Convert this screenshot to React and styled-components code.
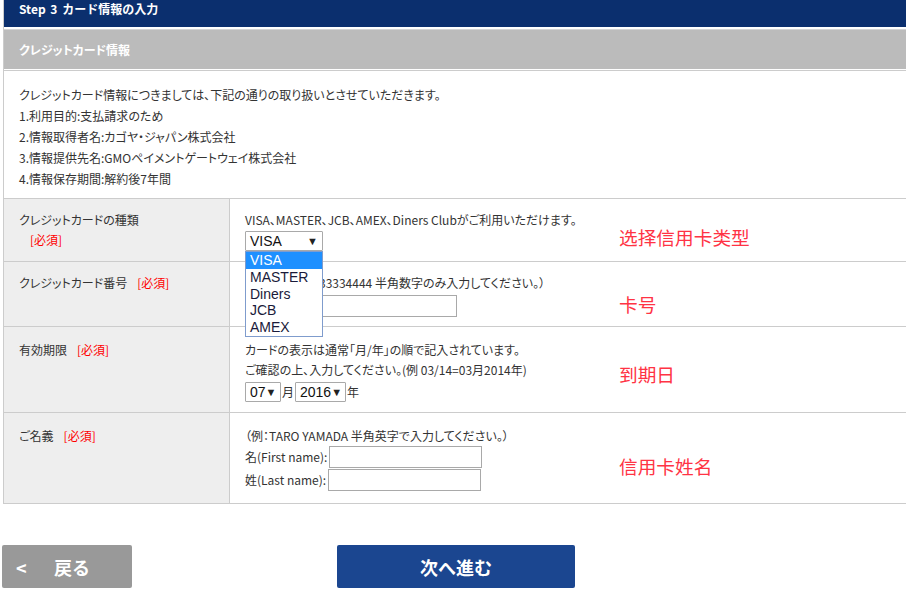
import styled, { createGlobalStyle } from "styled-components"

const GlobalStyle = createGlobalStyle`
    body {
        margin: 0;
        background: #fff;
        font-family: "Noto Sans CJK JP", "Liberation Sans", sans-serif;
        font-size: 12px;
        color: #333;
    }
`

const Page = styled.div`
    width: 906px;
    overflow: hidden;
`

const Section = styled.div`
    margin-left: 3px;
    width: 920px;
    border-left: 1px solid #ccc;
    border-bottom: 1px solid #ccc;
`

const StepBar = styled.div`
    height: 27px;
    padding: 0 15px;
    background-color: #0b2f6e;
    color: #fff;
    font-weight: bold;
    line-height: 17px;
    word-spacing: 2px;
`

const SubBar = styled.div`
    margin-top: 2px;
    border-top: 1px solid #d4d4d4;
    height: 39px;
    padding: 0 15px;
    display: flex;
    align-items: center;
    background-color: #bbb;
    color: #fff;
    font-weight: bold;
    font-feature-settings: "palt";
`

const Intro = styled.div`
    margin-top: 1px;
    border-top: 1px solid #ccc;
    padding: 13px 15px 9px;
    line-height: 21px;
    font-feature-settings: "palt";
`

const Row = styled.div`
    display: flex;
    border-top: 1px solid #ccc;
    line-height: 20px;
    font-feature-settings: "palt";
`

const Label = styled.div`
    width: 226px;
    flex-shrink: 0;
    padding: ${props => props.pt}px 15px 0;
    box-sizing: border-box;
    background-color: #eee;
    border-right: 1px solid #ccc;
`

const Required = styled.span`
    color: #f00;
    margin-left: ${props => props.block ? "0" : "10px"};
    display: ${props => props.block ? "block" : "inline"};
    padding-left: ${props => props.block ? "11px" : "0"};
`

const Value = styled.div`
    flex: 1;
    display: flex;
    padding: ${props => props.pt}px 15px ${props => props.pb}px;
`

const Body = styled.div`
    width: 374px;
    flex-shrink: 0;
`

const Note = styled.div`
    align-self: center;
    margin-top: ${props => props.mt}px;
    color: #ff3344;
    font-family: "Noto Sans CJK SC", sans-serif;
    font-size: 18.7px;
    line-height: 24px;
`

const Line = styled.div`
    white-space: nowrap;
`

const FieldLine = styled.div`
    display: flex;
    align-items: center;
    white-space: nowrap;
    margin-top: ${props => props.mt || 0}px;
`

const SelectWrap = styled.div`
    position: relative;
    width: ${props => props.w}px;
    margin-top: ${props => props.mt || 0}px;
`

const FakeSelect = styled.div`
    box-sizing: border-box;
    width: ${props => props.w}px;
    height: 20px;
    border: 1px solid #a9a9a9;
    border-radius: 1px;
    padding: 0 4px;
    display: flex;
    align-items: center;
    justify-content: space-between;
    font-family: "Liberation Sans", Arial, sans-serif;
    font-size: 14px;
    color: #111;
    background: #fff;
`

const Caret = styled.span`
    font-size: 11px;
    color: #222;
`

const Dropdown = styled.ul`
    position: absolute;
    left: 0;
    top: 20px;
    width: 100%;
    box-sizing: border-box;
    margin: 0;
    padding: 0;
    list-style: none;
    border: 1px solid #7f9ccd;
    background: #fff;
    z-index: 2;
    font-family: "Liberation Sans", Arial, sans-serif;
    font-size: 14px;
`

const Option = styled.li`
    height: 16.8px;
    line-height: 17px;
    padding: 0 4px;
    background: ${props => props.selected ? "#1e90ff" : "transparent"};
    color: ${props => props.selected ? "#fff" : "#1a1a3a"};
`

const TextInput = styled.div`
    box-sizing: border-box;
    width: ${props => props.w}px;
    height: 22px;
    border: 1px solid #a9a9a9;
    background: #fff;
    margin-left: ${props => props.ml || 0}px;
`

const Unit = styled.span`
    margin: 0 1px;
`

const Actions = styled.div`
    display: flex;
    align-items: center;
    margin-top: 41px;
    padding-left: 2px;
`

const Button = styled.div`
    height: 43px;
    width: ${props => props.w}px;
    margin-left: ${props => props.ml || 0}px;
    box-sizing: border-box;
    border-radius: 2px;
    display: flex;
    align-items: center;
    justify-content: ${props => props.center ? "center" : "flex-start"};
    padding-left: ${props => props.center ? "0" : "14px"};
    background-color: ${props => props.bg};
    color: #fff;
    font-family: "Noto Sans CJK JP", sans-serif;
    font-size: 18px;
    font-weight: bold;
`

const Chevron = styled.span`
    width: 38px;
`

const cards = ["VISA", "MASTER", "Diners", "JCB", "AMEX"]

const App = () => {
    return (
        <Page>
            <GlobalStyle />
            <Section>
                <StepBar>Step 3 カード情報の入力</StepBar>
                <SubBar>クレジットカード情報</SubBar>
                <Intro>
                    <Line>クレジットカード情報につきましては、下記の通りの取り扱いとさせていただきます。</Line>
                    <Line>1.利用目的:支払請求のため</Line>
                    <Line>2.情報取得者名:カゴヤ・ジャパン株式会社</Line>
                    <Line>3.情報提供先名:GMOペイメントゲートウェイ株式会社</Line>
                    <Line>4.情報保存期間:解約後7年間</Line>
                </Intro>

                <Row>
                    <Label pt={11}>
                        クレジットカードの種類
                        <Required block>[必須]</Required>
                    </Label>
                    <Value pt={11} pb={10}>
                        <Body>
                            <Line>VISA、MASTER、JCB、AMEX、Diners Clubがご利用いただけます。</Line>
                            <SelectWrap w={78} mt={1}>
                                <FakeSelect w={78}>VISA<Caret>▼</Caret></FakeSelect>
                                <Dropdown>
                                    {cards.map((card, index) => (
                                        <Option key={card} selected={index === 0}>{card}</Option>
                                    ))}
                                </Dropdown>
                            </SelectWrap>
                        </Body>
                        <Note mt={12}>选择信用卡类型</Note>
                    </Value>
                </Row>

                <Row>
                    <Label pt={11}>
                        クレジットカード番号<Required>[必須]</Required>
                    </Label>
                    <Value pt={11} pb={9}>
                        <Body>
                            <Line>（例 1111222233334444 半角数字のみ入力してください。）</Line>
                            <FieldLine mt={2}>
                                <TextInput w={212} />
                            </FieldLine>
                        </Body>
                        <Note mt={18}>卡号</Note>
                    </Value>
                </Row>

                <Row>
                    <Label pt={13}>
                        有効期限<Required>[必須]</Required>
                    </Label>
                    <Value pt={13} pb={10}>
                        <Body>
                            <Line>カードの表示は通常「月/年」の順で記入されています。</Line>
                            <Line>ご確認の上、入力してください。(例 03/14=03月2014年)</Line>
                            <FieldLine mt={2}>
                                <FakeSelect w={36}>07<Caret>▼</Caret></FakeSelect>
                                <Unit>月</Unit>
                                <FakeSelect w={51}>2016<Caret>▼</Caret></FakeSelect>
                                <Unit>年</Unit>
                            </FieldLine>
                        </Body>
                        <Note mt={6}>到期日</Note>
                    </Value>
                </Row>

                <Row>
                    <Label pt={13}>
                        ご名義<Required>[必須]</Required>
                    </Label>
                    <Value pt={13} pb={12}>
                        <Body>
                            <Line>（例：TARO YAMADA 半角英字で入力してください。）</Line>
                            <FieldLine>
                                名(First name):<TextInput w={153} ml={2} />
                            </FieldLine>
                            <FieldLine mt={1}>
                                姓(Last name):<TextInput w={153} ml={2} />
                            </FieldLine>
                        </Body>
                        <Note mt={14}>信用卡姓名</Note>
                    </Value>
                </Row>
            </Section>

            <Actions>
                <Button w={130} bg="#999">
                    <Chevron>&lt;</Chevron>戻る
                </Button>
                <Button w={238} ml={205} bg="#1b4690" center>
                    次へ進む
                </Button>
            </Actions>
        </Page>
    )
}

export default App
